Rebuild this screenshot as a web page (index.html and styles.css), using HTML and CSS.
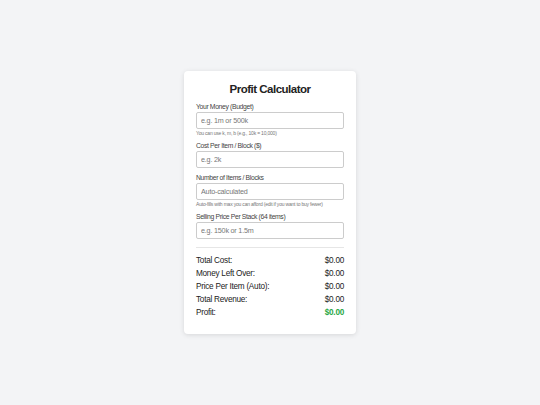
FILE: index.html
```html
<!DOCTYPE html>
<html>

<head>
    <title>Profit Calculator</title>
    <link rel="stylesheet" href="styles.css">
</head>

<body>
    <div class="calculator">
        <h1>Profit Calculator</h1>

        <div class="field">
            <label for="budget">Your Money (Budget)</label>
            <input type="text" id="budget" placeholder="e.g. 1m or 500k">
            <div class="hint">You can use k, m, b (e.g., 10k = 10,000)</div>
        </div>

        <div class="field">
            <label for="cost">Cost Per Item / Block ($)</label>
            <input type="text" id="cost" placeholder="e.g. 2k">
        </div>

        <div class="field">
            <label for="items">Number of Items / Blocks</label>
            <input type="text" id="items" placeholder="Auto-calculated">
            <div class="hint">Auto-fills with max you can afford (edit if you want to buy fewer)</div>
        </div>

        <div class="field">
            <label for="stack">Selling Price Per Stack (64 items)</label>
            <input type="text" id="stack" placeholder="e.g. 150k or 1.5m">
        </div>

        <div class="results">
            <div class="row"><span>Total Cost:</span><span>$0.00</span></div>
            <div class="row"><span>Money Left Over:</span><span>$0.00</span></div>
            <div class="row"><span>Price Per Item (Auto):</span><span>$0.00</span></div>
            <div class="row"><span>Total Revenue:</span><span>$0.00</span></div>
            <div class="row"><span>Profit:</span><span class="profit">$0.00</span></div>
        </div>
    </div>
</body>

</html>
```

FILE: styles.css
```css
body {
    font-family: "Liberation Sans", Arial, sans-serif;
    background-color: #f3f4f6;
    display: flex;
    justify-content: center;
    align-items: flex-start;
    height: 100vh;
    margin: 0;
    color: #222;
}

.calculator {
    background-color: #fff;
    width: 148px;
    padding: 11px 12px 15px;
    margin-top: 71px;
    border-radius: 4px;
    box-shadow: 0 1px 5px rgba(0, 0, 0, 0.12);
}

h1 {
    font-size: 11.5px;
    line-height: 14px;
    letter-spacing: -0.5px;
    text-align: center;
    margin: 0 0 6px;
    color: #222;
}

.field {
    margin-bottom: 5px;
}

label {
    display: block;
    font-size: 6.8px;
    line-height: 9px;
    letter-spacing: -0.35px;
    color: #444;
    margin-bottom: 1px;
}

input {
    display: block;
    box-sizing: border-box;
    width: 100%;
    height: 17px;
    padding: 0 4px;
    font-family: inherit;
    font-size: 7.2px;
    letter-spacing: -0.2px;
    border: 1px solid #ccc;
    border-radius: 2px;
    color: #333;
}

input::placeholder {
    color: #777;
}

.hint {
    font-size: 5px;
    line-height: 6px;
    letter-spacing: -0.2px;
    color: #777;
    margin-top: 1px;
}

.results {
    border-top: 1px solid #e6e6e6;
    margin-top: 8px;
    padding-top: 6px;
}

.row {
    display: flex;
    justify-content: space-between;
    font-size: 8.2px;
    line-height: 13px;
    letter-spacing: -0.25px;
}

.profit {
    color: #28a745;
    font-weight: bold;
}
```
